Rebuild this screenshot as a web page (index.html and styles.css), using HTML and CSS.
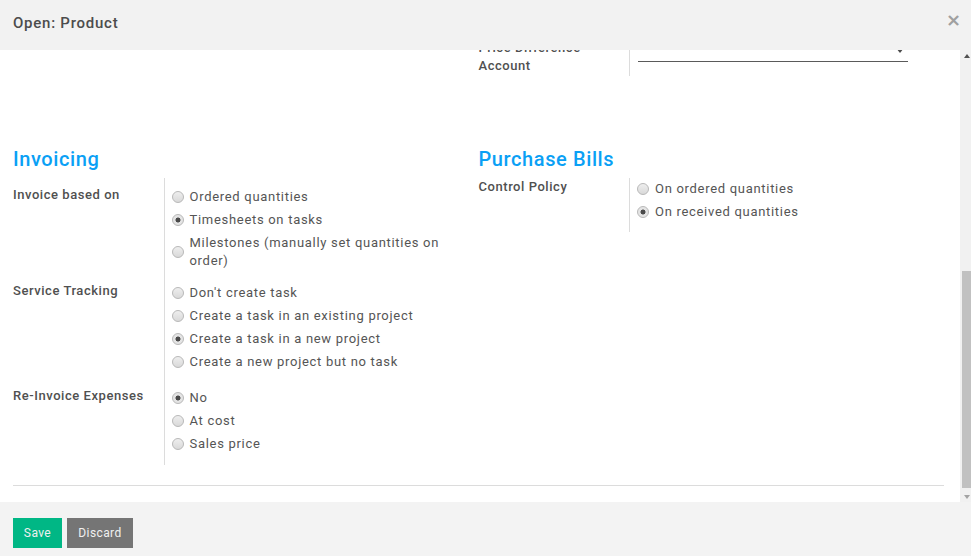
FILE: index.html
```html
<!DOCTYPE html>
<html lang="en">
<head>
<meta charset="utf-8">
<title>Open: Product</title>
<link rel="stylesheet" href="styles.css">
</head>
<body>
<div class="modal">
  <header class="modal-header">
    <h4 class="modal-title">Open: Product</h4>
    <button class="close" type="button" aria-label="Close">×</button>
  </header>

  <div class="modal-main">
    <div class="modal-body">
      <div class="sheet">
        <div class="group-row top-group">
          <div class="group"></div>
          <div class="group">
            <table class="form-table">
              <tr>
                <td class="label-cell"><label>Price Difference Account</label></td>
                <td class="field-cell">
                  <div class="select-field"><span class="caret"></span></div>
                </td>
              </tr>
            </table>
          </div>
        </div>

        <div class="group-row">
          <div class="group">
            <h2 class="group-title">Invoicing</h2>
            <table class="form-table spaced-top">
              <tr>
                <td class="label-cell"><label>Invoice based on</label></td>
                <td class="field-cell">
                  <div class="radio-list">
                    <label class="radio-item"><input type="radio" name="inv"><span>Ordered quantities</span></label>
                    <label class="radio-item"><input type="radio" name="inv" checked><span>Timesheets on tasks</span></label>
                    <label class="radio-item"><input type="radio" name="inv"><span>Milestones (manually set quantities on order)</span></label>
                  </div>
                </td>
              </tr>
              <tr>
                <td class="label-cell"><label>Service Tracking</label></td>
                <td class="field-cell">
                  <div class="radio-list">
                    <label class="radio-item"><input type="radio" name="trk"><span>Don't create task</span></label>
                    <label class="radio-item"><input type="radio" name="trk"><span>Create a task in an existing project</span></label>
                    <label class="radio-item"><input type="radio" name="trk" checked><span>Create a task in a new project</span></label>
                    <label class="radio-item"><input type="radio" name="trk"><span>Create a new project but no task</span></label>
                  </div>
                </td>
              </tr>
              <tr class="row-gap">
                <td class="label-cell"><label>Re-Invoice Expenses</label></td>
                <td class="field-cell">
                  <div class="radio-list">
                    <label class="radio-item"><input type="radio" name="exp" checked><span>No</span></label>
                    <label class="radio-item"><input type="radio" name="exp"><span>At cost</span></label>
                    <label class="radio-item"><input type="radio" name="exp"><span>Sales price</span></label>
                  </div>
                </td>
              </tr>
            </table>
          </div>
          <div class="group">
            <h2 class="group-title">Purchase Bills</h2>
            <table class="form-table">
              <tr>
                <td class="label-cell"><label>Control Policy</label></td>
                <td class="field-cell">
                  <div class="radio-list">
                    <label class="radio-item"><input type="radio" name="pol"><span>On ordered quantities</span></label>
                    <label class="radio-item"><input type="radio" name="pol" checked><span>On received quantities</span></label>
                  </div>
                </td>
              </tr>
            </table>
          </div>
        </div>

        <hr class="separator">
      </div>
    </div>
    <div class="scrollbar">
      <span class="arrow up"></span>
      <div class="track"><div class="thumb"></div></div>
      <span class="arrow down"></span>
    </div>
  </div>

  <footer class="modal-footer">
    <button class="btn btn-primary" type="button">Save</button>
    <button class="btn btn-secondary" type="button">Discard</button>
  </footer>
</div>
</body>
</html>
```

FILE: styles.css
```css
* { box-sizing: border-box; }

html, body {
  margin: 0;
  padding: 0;
  height: 100%;
}

body {
  font-family: Roboto, "Noto Sans", sans-serif;
  font-size: 13px;
  color: #4c4c4c;
  background: #ffffff;
  overflow: hidden;
}

.modal {
  display: flex;
  flex-direction: column;
  width: 971px;
  height: 556px;
}

.modal-header {
  flex: 0 0 50px;
  background: #f2f2f2;
  display: flex;
  align-items: center;
  justify-content: space-between;
  padding: 0 11px 0 13px;
  position: relative;
  z-index: 1;
}

.modal-title {
  margin: 0;
  font-size: 15px;
  font-weight: 500;
  letter-spacing: 0.75px;
  color: #4c4c4c;
  margin-top: -4px;
}

.close {
  border: 0;
  background: none;
  padding: 0;
  font-family: "DejaVu Sans", sans-serif;
  font-size: 18px;
  font-weight: bold;
  color: #a0a0a0;
  line-height: 1;
  margin-top: -10px;
  margin-right: -1px;
}

.modal-main {
  flex: 0 0 452px;
  display: flex;
  background: #ffffff;
}

.modal-body {
  flex: 1;
  overflow: hidden;
  padding: 0 16px 0 13px;
}

.sheet {
  margin-top: -11px;
}

.group-row {
  display: grid;
  grid-template-columns: 1fr 1fr;
}

.top-group {
  margin-bottom: 71px;
}

.form-table {
  border-collapse: collapse;
  border-spacing: 0;
}

.label-cell {
  width: 151px;
  vertical-align: top;
  padding: 0 8px 6px 0;
  border-right: 1px solid #dcdcdc;
  line-height: 18px;
}

.label-cell label {
  font-weight: 500;
  letter-spacing: 0.55px;
  color: #505050;
  display: block;
}

.top-group .label-cell {
  padding-bottom: 1px;
}

.field-cell {
  vertical-align: top;
  padding: 0 0 6px 8px;
}

.spaced-top tr:first-child td {
  padding-top: 8px;
  padding-bottom: 7px;
}

.form-table .row-gap td {
  padding-top: 5px;
  padding-bottom: 7px;
}

.select-field {
  position: relative;
  width: 270px;
  height: 23px;
  border-bottom: 1px solid #5a5a5a;
}

.caret {
  position: absolute;
  right: 4px;
  top: 9px;
  width: 0;
  height: 0;
  border-left: 4px solid transparent;
  border-right: 4px solid transparent;
  border-top: 5px solid #4c4c4c;
}

.group-title {
  margin: 0 0 7px 0;
  font-size: 20px;
  font-weight: 500;
  line-height: 24px;
  letter-spacing: 0.6px;
  color: #0aa0f5;
}

.radio-list {
  padding-top: 2px;
}

.radio-item {
  display: flex;
  align-items: center;
  gap: 6px;
  line-height: 18px;
  margin-bottom: 5px;
  color: #555555;
  letter-spacing: 0.7px;
  padding-right: 20px;
}

.radio-item input {
  appearance: none;
  -webkit-appearance: none;
  flex: 0 0 12px;
  width: 12px;
  height: 12px;
  margin: 0 0 0 -1px;
  border-radius: 50%;
  border: 1px solid #b9b9b9;
  background: linear-gradient(#eeeeee, #d9d9d9);
}

.radio-item input:checked {
  background: radial-gradient(circle, #4a4a4a 0 2.2px, #e4e4e4 2.8px);
}

.separator {
  border: 0;
  border-top: 1px solid #dcdcdc;
  margin: 20px 0 16px;
}

.scrollbar {
  flex: 0 0 11px;
  background: #f1f1f1;
  display: flex;
  flex-direction: column;
  align-items: stretch;
}

.arrow {
  flex: 0 0 11px;
  display: flex;
  justify-content: center;
  align-items: center;
}

.arrow::before {
  content: "";
  width: 0;
  height: 0;
  border-left: 3.5px solid transparent;
  border-right: 3.5px solid transparent;
  margin-left: 2px;
}

.arrow.up::before {
  border-bottom: 4px solid #505050;
}

.arrow.down::before {
  border-top: 4px solid #a3a3a3;
}

.track {
  flex: 1;
  display: flex;
  flex-direction: column;
  justify-content: flex-end;
  padding-left: 2px;
  padding-bottom: 3px;
}

.thumb {
  height: 217px;
  background: #c1c1c1;
}

.modal-footer {
  flex: 0 0 54px;
  background: #f3f3f3;
  display: flex;
  align-items: flex-start;
  gap: 5px;
  padding: 16px 13px 0;
}

.btn {
  height: 30px;
  border: 0;
  border-radius: 0;
  font-family: Roboto, "Noto Sans", sans-serif;
  font-size: 12px;
  letter-spacing: 0.4px;
  padding: 0;
  color: #f0f0f0;
}

.btn-primary {
  background: #00b785;
  width: 49px;
}

.btn-secondary {
  background: #757575;
  width: 66px;
}
```
